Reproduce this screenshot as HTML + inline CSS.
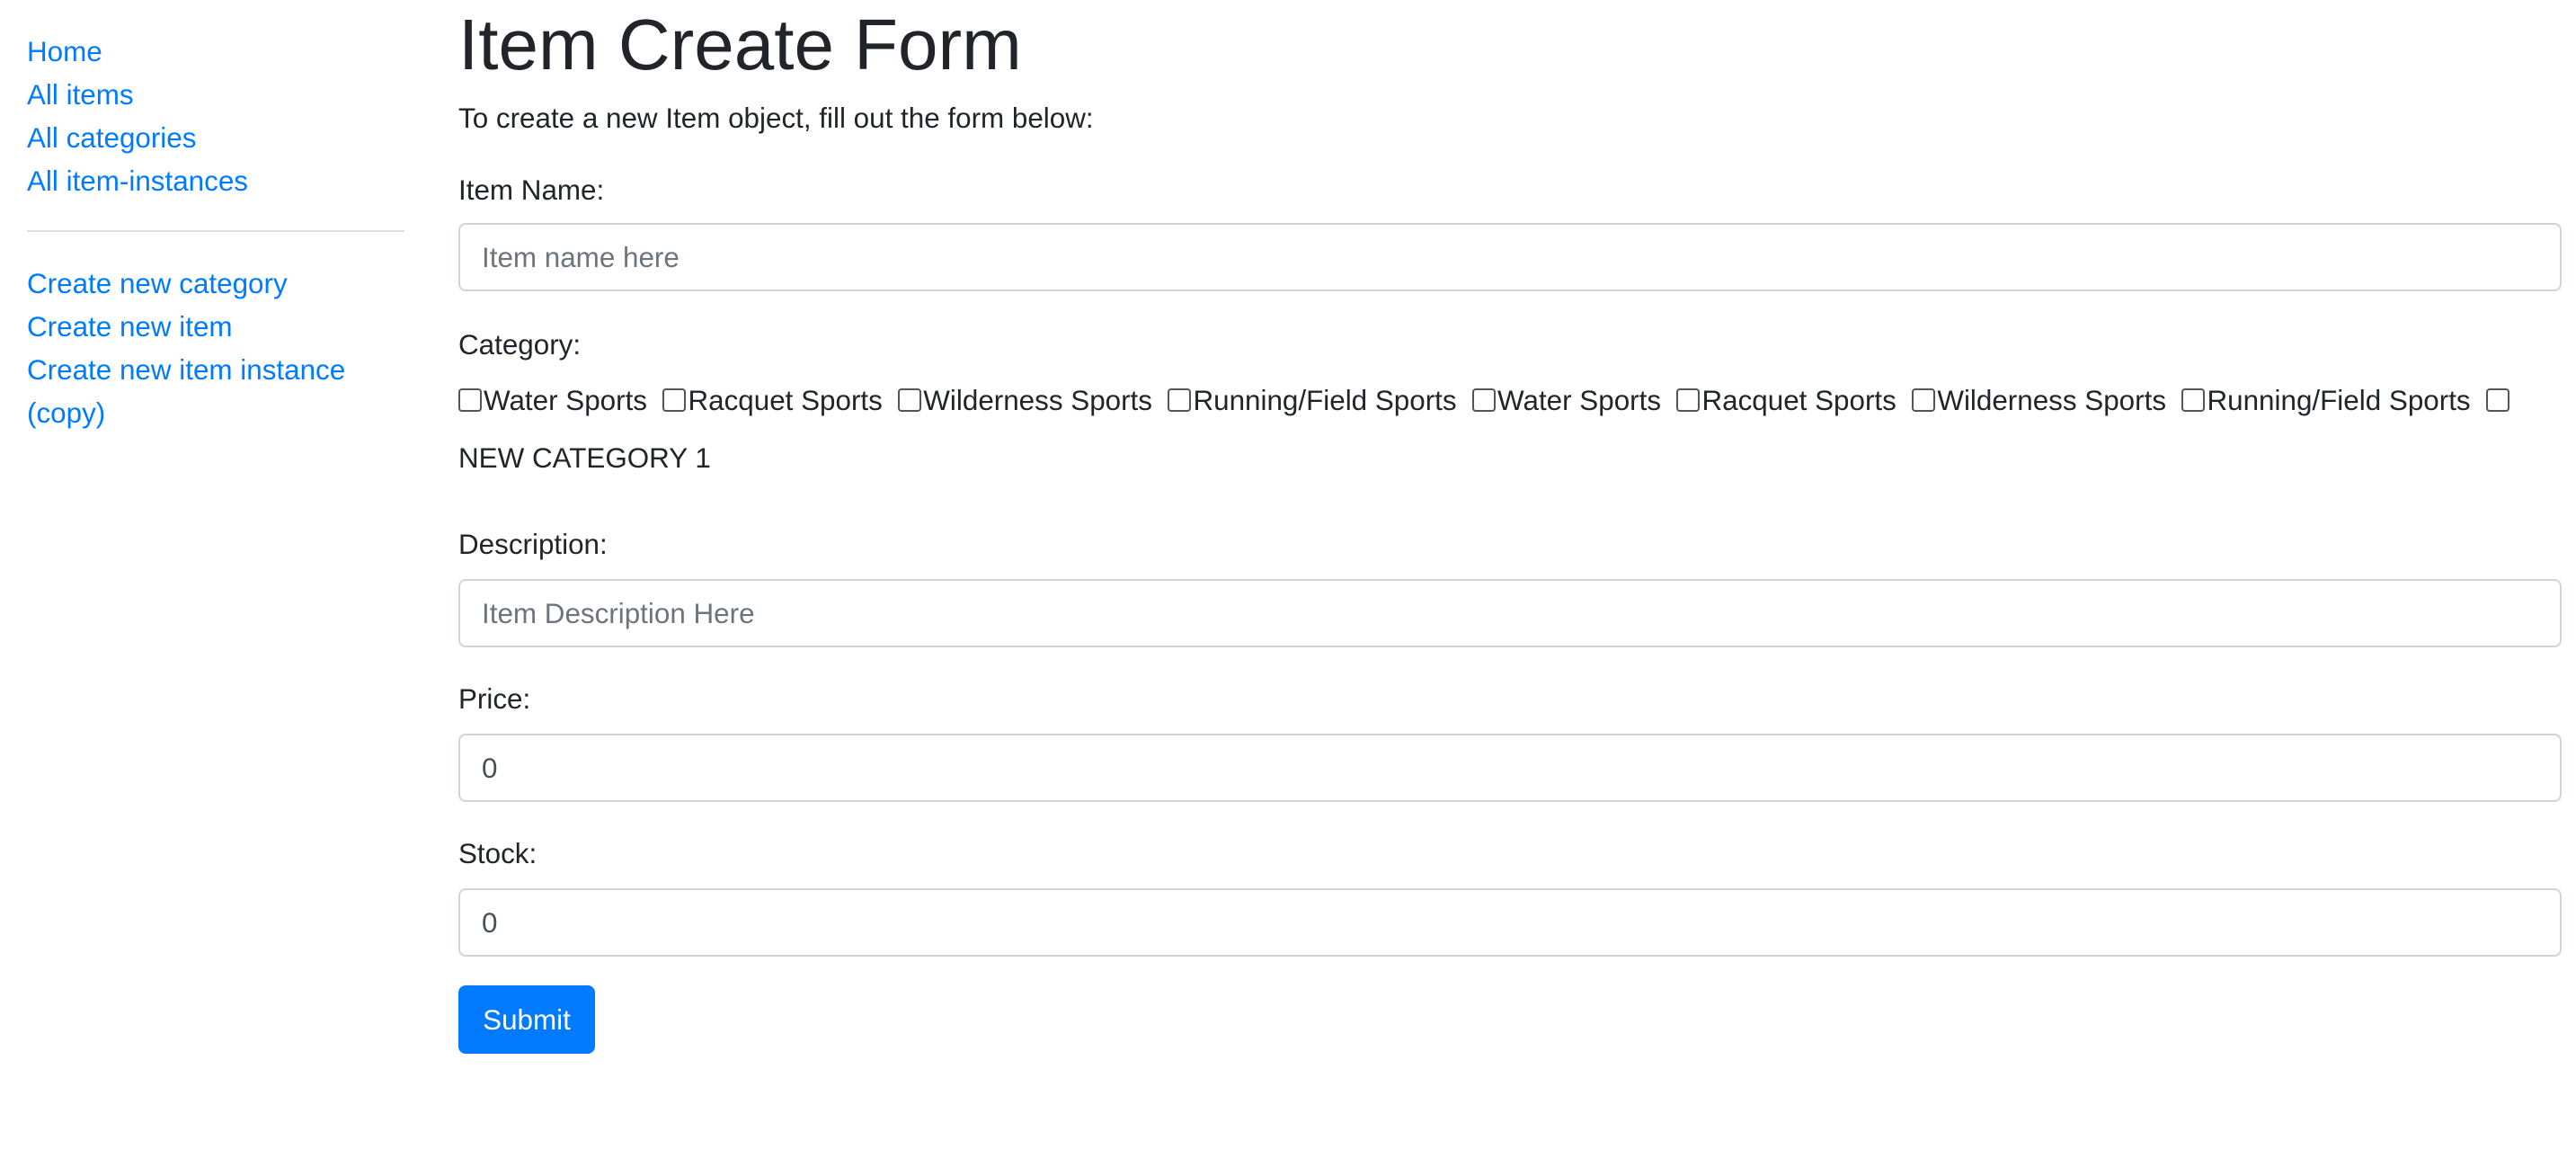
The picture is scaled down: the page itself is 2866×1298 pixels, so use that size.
<!DOCTYPE html>
<html><head><meta charset="utf-8">
<style>
html{zoom:2}
body{margin:0;width:1433px;height:649px;background:#fff;font-family:"Liberation Sans",Arial,sans-serif;font-size:15.7px;color:#212529;position:relative;overflow:hidden}
a{color:#007bff;text-decoration:none}
.side{position:absolute;left:15px;width:210px;line-height:24px}
.side div{height:24px}
hr{position:absolute;left:15px;width:210px;top:128px;margin:0;border:0;border-top:1px solid #e0e0e0}
.abs{position:absolute;left:255px}
h1{margin:0;font-size:40px;font-weight:500;line-height:48px;top:1px}
.lbl{line-height:24px}
.inp{position:absolute;left:255px;width:1168px;height:36px;border:1px solid #ced4da;border-radius:4px;box-sizing:content-box;padding:0;font-size:15.7px;line-height:37px;text-indent:12px;color:#6c757d}
.inp.v{color:#495057}
.cb{position:absolute;left:255px;top:207px;width:1170px;line-height:32px}
.cb span{white-space:nowrap}
.box{display:inline-block;width:11px;height:11px;border:1px solid #555;border-radius:2px;vertical-align:-1px;margin-right:1px}
.btn{position:absolute;left:255px;top:548px;width:76px;height:38px;background:#007bff;color:#fff;border-radius:4px;line-height:39px;text-align:center}
</style></head><body>
<div class="side" style="top:17px">
<div><a>Home</a></div><div><a>All items</a></div><div><a>All categories</a></div><div><a>All item-instances</a></div>
</div>
<hr>
<div class="side" style="top:146px">
<div><a>Create new category</a></div><div><a>Create new item</a></div><div style="height:48px"><a>Create new item instance (copy)</a></div>
</div>
<h1 class="abs">Item Create Form</h1>
<div class="abs lbl" style="top:54px">To create a new Item object, fill out the form below:</div>
<div class="abs lbl" style="top:94px">Item Name:</div>
<div class="inp" style="top:124px">Item name here</div>
<div class="abs lbl" style="top:180px">Category:</div>
<div class="cb"><span><i class="box"></i>Water Sports</span> &nbsp;<span><i class="box"></i>Racquet Sports</span> &nbsp;<span><i class="box"></i>Wilderness Sports</span> &nbsp;<span><i class="box"></i>Running/Field Sports</span> &nbsp;<span><i class="box"></i>Water Sports</span> &nbsp;<span><i class="box"></i>Racquet Sports</span> &nbsp;<span><i class="box"></i>Wilderness Sports</span> &nbsp;<span><i class="box"></i>Running/Field Sports</span> &nbsp;<i class="box"></i> NEW CATEGORY 1</div>
<div class="abs lbl" style="top:291px">Description:</div>
<div class="inp" style="top:322px">Item Description Here</div>
<div class="abs lbl" style="top:377px">Price:</div>
<div class="inp v" style="top:408px">0</div>
<div class="abs lbl" style="top:463px">Stock:</div>
<div class="inp v" style="top:494px">0</div>
<div class="btn">Submit</div>
</body></html>
